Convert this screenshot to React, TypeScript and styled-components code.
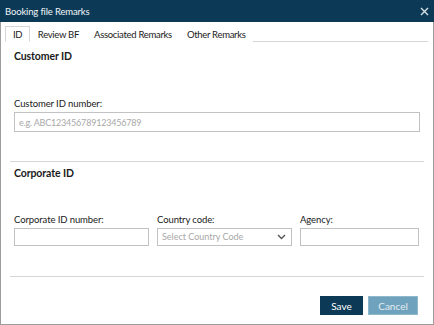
import React from "react"
import styled, { createGlobalStyle } from "styled-components"

const Colors = {
    navy: "#0c3a56",
    frame: "#9c9c9c",
    border: "#c2c2c2",
    line: "#d6d6d6",
    text: "#1a1a1a",
    placeholder: "#a8a8a8",
    cancel: "#6fa2bc",
}

const font = `Lato, "Open Sans", sans-serif`

const GlobalStyle = createGlobalStyle`
    html, body {
        margin: 0;
        padding: 0;
        background: white;
    }
    body {
        font-family: ${font};
        color: ${Colors.text};
    }
`

const Window = styled.div`
    width: 434px;
    height: 325px;
    box-sizing: border-box;
    border: 1px solid ${Colors.frame};
    border-top: none;
    display: flex;
    flex-direction: column;
    background: white;
`

const TitleBar = styled.div`
    height: 22px;
    margin: 0 -1px;
    padding: 0 5px 0 5px;
    background: ${Colors.navy};
    color: #f2f5f7;
    display: flex;
    align-items: center;
    justify-content: space-between;
    font-size: 9.5px;
    letter-spacing: -0.15px;

    .close {
        display: flex;
        cursor: pointer;
    }
`

const TabStrip = styled.div`
    margin: 3px 5px 0 4px;
    height: 16px;
    border-bottom: 1px solid ${Colors.line};
    display: flex;
    align-items: flex-end;
`

const Tab = styled.div<{ $active?: boolean }>`
    height: 16px;
    margin-bottom: -1px;
    padding: 0 ${(p) => (p.$active ? "7px" : "6.5px")};
    box-sizing: border-box;
    font-size: 9.5px;
    letter-spacing: -0.3px;
    line-height: 15px;
    border: 1px solid ${(p) => (p.$active ? Colors.line : "transparent")};
    border-bottom-color: ${(p) => (p.$active ? "white" : "transparent")};
    background: white;
    cursor: pointer;
`

const Body = styled.div`
    padding: 0 13px;
    display: flex;
    flex-direction: column;
    flex: 1;
`

const Heading = styled.div<{ $top: number }>`
    margin-top: ${(p) => p.$top}px;
    font-size: 10.5px;
    font-weight: bold;
    letter-spacing: -0.1px;
    line-height: 14px;
`

const Separator = styled.div<{ $top: number }>`
    margin: ${(p) => p.$top}px -4px 0 -4px;
    border-top: 1px solid ${Colors.line};
`

const Field = styled.label`
    display: flex;
    flex-direction: column;
    gap: 2px;
    font-size: 9.5px;
    letter-spacing: -0.1px;
    line-height: 12px;
`

const Input = styled.input<{ $h: number }>`
    height: ${(p) => p.$h}px;
    box-sizing: border-box;
    width: 100%;
    border: 1px solid ${Colors.border};
    padding: 0 4px;
    font-family: ${font};
    font-size: 9px;
    letter-spacing: -0.2px;
    outline: none;

    &::placeholder {
        color: ${Colors.placeholder};
    }
`

const SelectBox = styled.div`
    height: 18px;
    box-sizing: border-box;
    border: 1px solid ${Colors.border};
    padding: 0 5px 0 4px;
    display: flex;
    align-items: center;
    justify-content: space-between;
    color: ${Colors.placeholder};
    font-size: 9px;
    letter-spacing: 0;
`

const Row = styled.div`
    margin-top: 34px;
    display: grid;
    grid-template-columns: 135px 135px 119px;
    gap: 8px;
`

const Footer = styled.div`
    margin-top: 19px;
    display: flex;
    justify-content: flex-end;
    gap: 5px;
    padding-right: 2px;
`

const Button = styled.button<{ $primary?: boolean }>`
    flex: none;
    height: 19px;
    padding: 0;
    width: ${(p) => (p.$primary ? "43px" : "50px")};
    border: 1px solid ${(p) => (p.$primary ? Colors.navy : "#8fb8cc")};
    background: ${(p) => (p.$primary ? Colors.navy : Colors.cancel)};
    color: ${(p) => (p.$primary ? "white" : "#e2edf2")};
    font-family: ${font};
    font-size: 10px;
    cursor: pointer;
`

const Chevron = () => (
    <svg width="9" height="6" viewBox="0 0 9 6">
        <path d="M1 1 L4.5 4.5 L8 1" stroke="#555" strokeWidth="1.4" fill="none" />
    </svg>
)

const CloseIcon = () => (
    <svg width="9" height="9" viewBox="0 0 9 9">
        <path d="M1 1 L8 8 M8 1 L1 8" stroke="#d9e1e6" strokeWidth="1.4" fill="none" />
    </svg>
)

const App: React.FC = () => {
    return (
        <>
            <GlobalStyle />
            <Window>
                <TitleBar>
                    <span>Booking file Remarks</span>
                    <span className="close">
                        <CloseIcon />
                    </span>
                </TitleBar>
                <TabStrip>
                    <Tab $active>ID</Tab>
                    <Tab>Review BF</Tab>
                    <Tab>Associated Remarks</Tab>
                    <Tab>Other Remarks</Tab>
                </TabStrip>
                <Body>
                    <Heading $top={7}>Customer ID</Heading>
                    <Field style={{ marginTop: 35 }}>
                        Customer ID number:
                        <Input $h={20} placeholder="e.g. ABC123456789123456789" />
                    </Field>
                    <Separator $top={29} />
                    <Heading $top={4}>Corporate ID</Heading>
                    <Row>
                        <Field>
                            Corporate ID number:
                            <Input $h={18} />
                        </Field>
                        <Field>
                            Country code:
                            <SelectBox>
                                Select Country Code
                                <Chevron />
                            </SelectBox>
                        </Field>
                        <Field>
                            Agency:
                            <Input $h={18} />
                        </Field>
                    </Row>
                    <Separator $top={30} />
                    <Footer>
                        <Button $primary>Save</Button>
                        <Button>Cancel</Button>
                    </Footer>
                </Body>
            </Window>
        </>
    )
}

export default App
